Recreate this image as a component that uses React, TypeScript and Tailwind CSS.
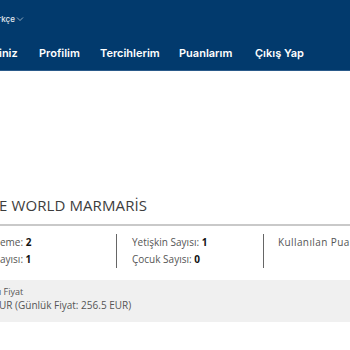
const NAV = ["iniz", "Profilim", "Tercihlerim", "Puanlarım", "Çıkış Yap"];

export default function App() {
  return (
    <div className="w-[350px] h-[350px] overflow-hidden bg-white" style={{ fontFamily: "'Open Sans', sans-serif" }}>
      <header className="bg-[#023a6d]">
        <div className="h-[37px] flex items-center">
          <span className="-ml-[2px] text-[8px] font-medium text-white/90 flex items-center" style={{ fontFamily: "Inter, sans-serif" }}>
            rkçe
            <svg width="8" height="6" viewBox="0 0 8 6" className="ml-[1px]">
              <path d="M1 1.5 L4 4.5 L7 1.5" fill="none" stroke="#ffffffb0" strokeWidth="0.8" />
            </svg>
          </span>
        </div>
        <nav className="h-[34px] flex items-center border-b border-[#2a5a8a] text-[11px] font-semibold text-white" style={{ fontFamily: "Inter, sans-serif" }}>
          <span className="-ml-[1px] w-[40px]">{NAV[0]}</span>
          <span className="w-[61px]">{NAV[1]}</span>
          <span className="w-[79px]">{NAV[2]}</span>
          <span className="w-[76px]">{NAV[3]}</span>
          <span>{NAV[4]}</span>
        </nav>
      </header>

      <main className="pt-[124px]">
        <h1 className="-ml-[1px] text-[15px] leading-[20px] tracking-[0.1px] text-[#3d3d3d]">E WORLD MARMARİS</h1>
        <div className="mt-[9px] h-[2px] bg-[#c9c9c9]" />

        <div className="mt-[8px] flex text-[10px] leading-[17px] text-[#555]">
          <div className="w-[116px] shrink-0">
            <p>eme: <b className="text-[#111]">2</b></p>
            <p>ayısı: <b className="text-[#111]">1</b></p>
          </div>
          <div className="w-[147px] shrink-0 border-l border-[#666] pl-[15px]">
            <p>Yetişkin Sayısı: <b className="text-[#111]">1</b></p>
            <p>Çocuk Sayısı: <b className="text-[#111]">0</b></p>
          </div>
          <div className="shrink-0 border-l border-[#666] pl-[14px] whitespace-nowrap tracking-[0.4px]">
            <p>Kullanılan Puan: <b className="text-[#111]">0</b></p>
          </div>
        </div>

        <div className="mt-[12px] h-[42px] bg-[#f0f0f0] pt-[5px] text-[#555]">
          <p className="-ml-[1px] text-[9px] leading-[13px]">ı Fiyat</p>
          <p className="-ml-[1px] text-[10px] leading-[14px]">UR (Günlük Fiyat: 256.5 EUR)</p>
        </div>
      </main>
    </div>
  );
}
